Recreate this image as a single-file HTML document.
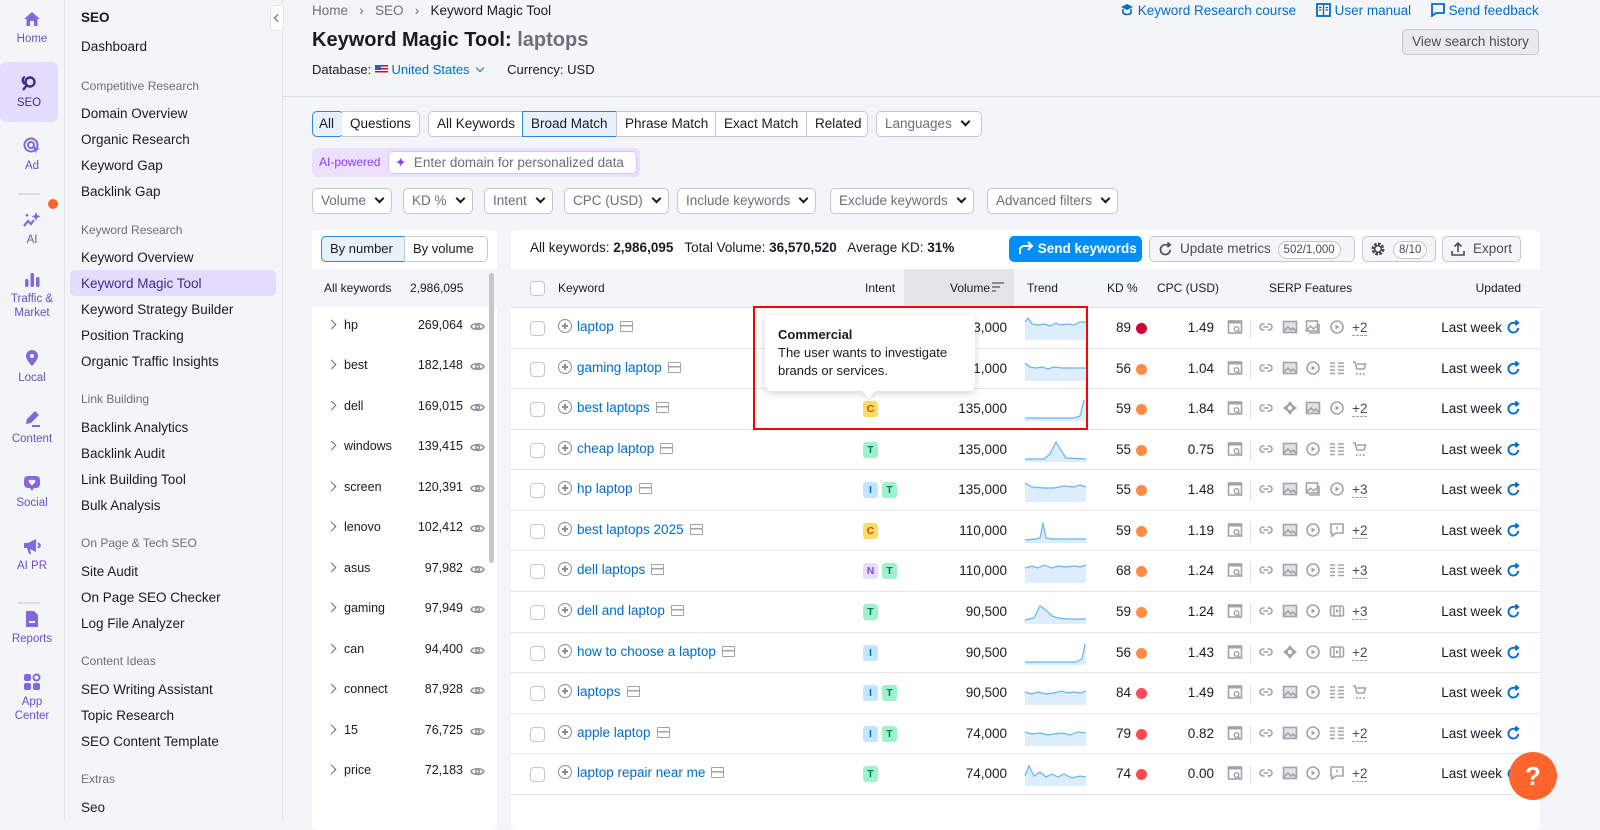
<!DOCTYPE html>
<html><head><meta charset="utf-8"><style>
*{box-sizing:border-box;margin:0;padding:0}
body{width:1600px;height:820px;overflow:hidden;background:#f4f5f9;font-family:"Liberation Sans",Arial,sans-serif;color:#191b23;font-size:13px;position:relative}
i{font-style:normal}
.abs{position:absolute}
.rail{left:0;top:0;width:65px;height:820px;border-right:1px solid #e4e5eb;background:#f4f5f9}
.ri{position:absolute;left:0;width:64px;text-align:center;color:#6c4fc2;font-size:11.5px;line-height:14px}
.ri svg{display:block;margin:0 auto 4px}
.nav{left:65px;top:0;width:218px;height:820px;border-right:1px solid #e4e5eb}
.nav div{position:absolute;left:16px;font-size:13.5px;white-space:nowrap}
.nav .h{color:#6c6e79;font-size:12px}
.btn{position:absolute;height:26px;border:1px solid #c4c7cf;border-radius:5px;background:#fff;font-size:13.5px;line-height:24px;padding:0 8px;white-space:nowrap;color:#191b23}
.sel{color:#6c6e79}
.chev{display:inline-block;width:7px;height:7px;border-right:2px solid #191b23;border-bottom:2px solid #191b23;transform:rotate(45deg);margin-left:10px;position:relative;top:-3px}
.card{background:#fff;border-radius:6px}
.row{position:absolute;left:511px;width:1029px;height:41px;border-top:1px solid #e4e5eb;font-size:13.5px}
.row>*{position:absolute;top:12px}
.cb{left:19px;top:13px!important;width:15px;height:15px;border:1px solid #c4c7cf;border-radius:4px;background:#fff}
.kw{left:47px;color:#006dca;white-space:nowrap;top:11px!important}
.kw .pl{display:inline-block;width:14px;height:14px;border:1.5px solid #8b8e99;border-radius:50%;vertical-align:-2px;margin-right:5px;position:relative}
.kw .pl:before{content:"";position:absolute;left:2.5px;top:5px;width:6px;height:1.5px;background:#8b8e99}
.kw .pl:after{content:"";position:absolute;left:5px;top:2.5px;width:1.5px;height:6px;background:#8b8e99}
.kw .sq{display:inline-block;width:13px;height:11px;border:1.5px solid #a0a3ad;border-radius:1px;margin-left:6px;vertical-align:-1px;background:linear-gradient(#a0a3ad,#a0a3ad) 0 3px/100% 1.5px no-repeat}
.int{left:352px;top:11px!important}
.b{display:inline-block;width:15px;height:16px;border-radius:3px;font-size:10.5px;font-weight:bold;text-align:center;line-height:16px;margin-right:4px;font-style:normal}
.bC{background:#ffd966;color:#b85c00}.bT{background:#9ef2c9;color:#007c65}.bI{background:#c4e5fe;color:#006dca}.bN{background:#e9dcff;color:#7f4ae8}
.vol{right:533px}
.tr{left:513px;top:8px!important}
.kd{left:590px;width:30px;text-align:right}
.dot{left:625px;top:15px!important;width:11px;height:11px;border-radius:50%;background:#ff8c43}
.cpc{right:326px}
.serp{left:716px;top:11px!important}
.upd{right:38px}
.rf{right:19px;top:12px!important}
.lr{position:absolute;left:312px;width:185px;height:40px;font-size:12.5px}
.lr .a{position:absolute;left:16px;top:14px;width:7px;height:7px;border-right:1.5px solid #6c6e79;border-bottom:1.5px solid #6c6e79;transform:rotate(-45deg)}
.lr .n{position:absolute;left:32px;top:11px}
.lr .c{position:absolute;right:34px;top:11px}
.lr svg{position:absolute;right:12px;top:12px}
</style></head><body>
<svg width="0" height="0" style="position:absolute">
<defs>
<symbol id="s1" viewBox="0 0 16 16"><rect x="1.5" y="2" width="13" height="12" fill="none" stroke="#a0a3ad" stroke-width="1.6"/><rect x="1.5" y="2" width="13" height="2.5" fill="#a0a3ad"/><circle cx="9.5" cy="10" r="2.3" fill="none" stroke="#a0a3ad" stroke-width="1.4"/><path d="M11 11.5l2 2" stroke="#a0a3ad" stroke-width="1.4"/></symbol>
<symbol id="lk" viewBox="0 0 16 16"><path d="M6.5 5H5a3 3 0 000 6h1.5M9.5 5H11a3 3 0 010 6H9.5M5.5 8h5" fill="none" stroke="#a0a3ad" stroke-width="1.6"/></symbol>
<symbol id="im" viewBox="0 0 16 16"><rect x="1.5" y="2.5" width="13" height="11" fill="none" stroke="#a0a3ad" stroke-width="1.6"/><path d="M2 12l4-4 3 3 2-2 3 3" fill="none" stroke="#a0a3ad" stroke-width="1.6"/><rect x="2" y="3" width="12" height="10" fill="#a0a3ad" opacity=".3"/></symbol>
<symbol id="pl" viewBox="0 0 16 16"><circle cx="8" cy="8" r="6" fill="none" stroke="#a0a3ad" stroke-width="1.6"/><path d="M6.5 5.5v5l4-2.5z" fill="#a0a3ad"/></symbol>
<symbol id="ls" viewBox="0 0 16 16"><path d="M1 3h5M1 6.5h5M1 10h5M1 13.5h5M9 3h6M9 6.5h6M9 10h6M9 13.5h6" stroke="#a0a3ad" stroke-width="1.6"/></symbol>
<symbol id="ct" viewBox="0 0 16 16"><path d="M1 2h2l2 7h7l1.5-5H5" fill="none" stroke="#a0a3ad" stroke-width="1.6"/><path d="M4 14h1.5M7.5 14h1.5M11 14h1.5" stroke="#a0a3ad" stroke-width="2"/></symbol>
<symbol id="dm" viewBox="0 0 16 16"><path d="M8 1l3 4 4 3-4 3-3 4-3-4-4-3 4-3z" fill="#a0a3ad"/><circle cx="8" cy="8" r="2.2" fill="#fff"/></symbol>
<symbol id="vd" viewBox="0 0 16 16"><rect x="1.5" y="3" width="13" height="10" rx="2" fill="none" stroke="#a0a3ad" stroke-width="1.6"/><path d="M5 3v10M11 3v10" stroke="#a0a3ad" stroke-width="1.4"/><path d="M7 6v4l3-2z" fill="#a0a3ad"/></symbol>
<symbol id="qa" viewBox="0 0 16 16"><path d="M2 2h12v9H7l-4 3v-3H2z" fill="none" stroke="#a0a3ad" stroke-width="1.6"/><path d="M8 4.5v3" stroke="#a0a3ad" stroke-width="1.4"/></symbol>
<symbol id="ig" viewBox="0 0 16 16"><rect x="1.5" y="2" width="11" height="10" fill="none" stroke="#a0a3ad" stroke-width="1.6"/><path d="M14 5v9H4" fill="none" stroke="#a0a3ad" stroke-width="1.6"/><path d="M2 11l3.5-4 3 3 3-3" fill="none" stroke="#a0a3ad" stroke-width="1.4"/></symbol>
<symbol id="rf" viewBox="0 0 16 16"><path d="M13 8.5A5.2 5.2 0 118 3h3.5" fill="none" stroke="#006dca" stroke-width="2"/><path d="M10 0.5l3 2.5-3 2.5" fill="none" stroke="#006dca" stroke-width="2"/></symbol>
<symbol id="ey" viewBox="0 0 16 16"><path d="M1 8c2-4 12-4 14 0-2 4-12 4-14 0z" fill="none" stroke="#8b8e99" stroke-width="1.5"/><circle cx="8" cy="8" r="2" fill="none" stroke="#8b8e99" stroke-width="1.5"/></symbol>
</defs></svg>

<!-- icon rail -->
<div class="abs rail">
<div class="ri" style="top:10px"><svg width="18" height="18" viewBox="0 0 18 18"><path d="M1 9L9 2l8 7h-2.5v7H11v-5H7v5H3.5V9z" fill="#8367dd"/></svg>Home</div>
<div style="position:absolute;left:0;top:62px;width:58px;height:60px;background:#e3dcfc;border-radius:6px"></div>
<div class="ri" style="top:74px;color:#3d2c8d;width:58px"><svg width="18" height="18" viewBox="0 0 18 18"><circle cx="10" cy="8" r="4.5" fill="none" stroke="#3d2c8d" stroke-width="2.4"/><path d="M7 11l-4 5M5 3c-3 1-3 5 0 7" stroke="#3d2c8d" stroke-width="2.4" fill="none"/></svg>SEO</div>
<div class="ri" style="top:137px"><svg width="18" height="18" viewBox="0 0 18 18"><circle cx="8" cy="8" r="6.5" fill="none" stroke="#8367dd" stroke-width="2"/><circle cx="8" cy="8" r="3" fill="none" stroke="#8367dd" stroke-width="2"/><path d="M9 9l8 3-3 1-1 3z" fill="#8367dd"/></svg>Ad</div>
<div style="position:absolute;left:18px;top:193px;width:22px;height:2px;background:#dcdde3"></div>
<div style="position:absolute;left:48px;top:199px;width:10px;height:10px;border-radius:50%;background:#ff642d"></div>
<div class="ri" style="top:211px"><svg width="20" height="18" viewBox="0 0 20 18"><path d="M14 1l1.3 3.2L18.5 5.5l-3.2 1.3L14 10l-1.3-3.2L9.5 5.5l3.2-1.3z" fill="#8367dd"/><path d="M2 15l4-5 3 3 3-4" fill="none" stroke="#8367dd" stroke-width="2.2"/><path d="M5 2l.7 1.5L7 4.2 5.7 5 5 6.5 4.3 5 3 4.2l1.3-.7z" fill="#8367dd"/></svg>AI</div>
<div class="ri" style="top:272px"><svg width="18" height="16" viewBox="0 0 18 16"><rect x="2" y="7" width="3.5" height="8" rx="1.5" fill="#8367dd"/><rect x="7.5" y="1" width="3.5" height="14" rx="1.5" fill="#8367dd"/><rect x="13" y="5" width="3.5" height="10" rx="1.5" fill="#8367dd"/></svg>Traffic &amp;<br>Market</div>
<div class="ri" style="top:349px"><svg width="16" height="18" viewBox="0 0 16 18"><path d="M8 1a6 6 0 016 6c0 4-6 10-6 10S2 11 2 7a6 6 0 016-6z" fill="#8367dd"/><circle cx="8" cy="7" r="2" fill="#f4f5f9"/></svg>Local</div>
<div class="ri" style="top:410px"><svg width="18" height="18" viewBox="0 0 18 18"><path d="M12 1l4 4-8 8-5 1 1-5z" fill="#8367dd"/><rect x="9" y="15" width="8" height="2" fill="#8367dd"/></svg>Content</div>
<div class="ri" style="top:474px"><svg width="18" height="18" viewBox="0 0 18 18"><rect x="1" y="2" width="16" height="12" rx="4" fill="#8367dd"/><path d="M7 14l2 3 2-3z" fill="#8367dd"/><path d="M9 11.5L6 8.5a1.7 1.7 0 013-2 1.7 1.7 0 013 2z" fill="#f4f5f9"/></svg>Social</div>
<div class="ri" style="top:537px"><svg width="20" height="18" viewBox="0 0 20 18"><path d="M2 6h4l8-4v13l-8-4H2z" fill="#8367dd"/><path d="M5 11l2 6h2l-1-6z" fill="#8367dd"/><path d="M16 6l2 2.5-2 2.5" stroke="#8367dd" stroke-width="2" fill="none"/></svg>AI PR</div>
<div style="position:absolute;left:18px;top:602px;width:22px;height:2px;background:#dcdde3"></div>
<div class="ri" style="top:610px"><svg width="16" height="18" viewBox="0 0 16 18"><path d="M2 1h8l4 4v12H2z" fill="#8367dd"/><rect x="5" y="11" width="6" height="2" fill="#f4f5f9"/></svg>Reports</div>
<div class="ri" style="top:673px"><svg width="18" height="18" viewBox="0 0 18 18"><rect x="1" y="1" width="7" height="7" rx="2" fill="#8367dd"/><circle cx="13.5" cy="4.5" r="3" fill="none" stroke="#8367dd" stroke-width="2"/><rect x="1" y="10" width="7" height="7" rx="2" fill="#8367dd"/><rect x="10" y="10" width="7" height="7" rx="2" fill="#8367dd"/></svg>App<br>Center</div>
</div>

<!-- nav -->
<div class="abs nav">
<div style="top:10px;font-weight:bold">SEO</div>
<div style="top:39px">Dashboard</div>
<div class="h" style="top:79px">Competitive Research</div>
<div style="top:106px">Domain Overview</div>
<div style="top:132px">Organic Research</div>
<div style="top:158px">Keyword Gap</div>
<div style="top:184px">Backlink Gap</div>
<div class="h" style="top:223px">Keyword Research</div>
<div style="top:250px">Keyword Overview</div>
<div style="left:5px;top:270px;width:206px;height:26px;background:#e3dcfc;border-radius:5px"></div>
<div style="top:276px;color:#3d2c8d">Keyword Magic Tool</div>
<div style="top:302px">Keyword Strategy Builder</div>
<div style="top:328px">Position Tracking</div>
<div style="top:354px">Organic Traffic Insights</div>
<div class="h" style="top:392px">Link Building</div>
<div style="top:420px">Backlink Analytics</div>
<div style="top:446px">Backlink Audit</div>
<div style="top:472px">Link Building Tool</div>
<div style="top:498px">Bulk Analysis</div>
<div class="h" style="top:536px">On Page &amp; Tech SEO</div>
<div style="top:564px">Site Audit</div>
<div style="top:590px">On Page SEO Checker</div>
<div style="top:616px">Log File Analyzer</div>
<div class="h" style="top:654px">Content Ideas</div>
<div style="top:682px">SEO Writing Assistant</div>
<div style="top:708px">Topic Research</div>
<div style="top:734px">SEO Content Template</div>
<div class="h" style="top:772px">Extras</div>
<div style="top:800px">Seo</div>
</div>
<div class="abs" style="left:270px;top:5px;width:14px;height:26px;background:#fff;border:1px solid #e4e5eb;border-radius:5px 0 0 5px"><span style="position:absolute;left:4px;top:9px;width:6px;height:6px;border-left:1.5px solid #6c4fc2;border-bottom:1.5px solid #6c4fc2;transform:rotate(45deg)"></span></div>

<!-- header -->
<div class="abs" style="left:312px;top:3px;font-size:13.5px;color:#6c6e79">Home &nbsp;&nbsp;›&nbsp;&nbsp; SEO &nbsp;&nbsp;›&nbsp;&nbsp; <span style="color:#191b23">Keyword Magic Tool</span></div>
<div class="abs" style="left:312px;top:29px;font-size:20px;font-weight:bold">Keyword Magic Tool: <span style="color:#6c6e79">laptops</span></div>
<div class="abs" style="left:312px;top:62px;font-size:13px">Database: <span style="display:inline-block;width:13px;height:9px;background:repeating-linear-gradient(#d1002f 0 1.5px,#fff 1.5px 3px);position:relative;vertical-align:0"><span style="position:absolute;left:0;top:0;width:6px;height:5px;background:#3b5bb5"></span></span> <span style="color:#006dca">United States</span> <span style="display:inline-block;width:6px;height:6px;border-right:1.5px solid #006dca;border-bottom:1.5px solid #006dca;transform:rotate(45deg);position:relative;top:-3px;margin-left:4px"></span><span style="margin-left:24px">Currency: USD</span></div>
<div class="abs" style="left:1120px;top:3px;font-size:13.5px;color:#006dca;white-space:nowrap">
<svg width="14" height="13" viewBox="0 0 14 13" style="vertical-align:-1px"><path d="M7 1L1 4l6 3 6-3z" fill="#006dca"/><path d="M3 6v4c2 2 6 2 8 0V6" fill="none" stroke="#006dca" stroke-width="1.6"/></svg> Keyword Research course
<span style="margin-left:16px"><svg width="15" height="14" viewBox="0 0 15 14" style="vertical-align:-2px"><rect x="1" y="1" width="13" height="12" fill="none" stroke="#006dca" stroke-width="1.8"/><path d="M7.5 1v12M3 4.5h2.5M3 7h2.5M9.5 4.5H12M9.5 7H12" stroke="#006dca" stroke-width="1.3"/></svg> User manual</span>
<span style="margin-left:16px"><svg width="14" height="14" viewBox="0 0 14 14" style="vertical-align:-2px"><path d="M1 1h12v9H5l-4 3z" fill="none" stroke="#006dca" stroke-width="1.8"/></svg> Send feedback</span></div>
<div class="abs" style="left:1402px;top:29px;width:137px;height:26px;background:#e9eaee;border:1px solid #c4c7cf;border-radius:5px;font-size:13.5px;color:#4a4d57;text-align:center;line-height:24px">View search history</div>
<div class="abs" style="left:283px;top:96px;width:1317px;height:1px;background:#dcdde3"></div>

<!-- tabs -->
<div class="btn" style="left:312px;top:111px;width:32px;background:#e6f1fb;border-color:#2e86de;padding:0 6px">All</div>
<div class="btn" style="left:342px;top:111px;width:78px;border-left:none;border-radius:0 5px 5px 0">Questions</div>
<div class="btn" style="left:428px;top:111px;width:95px;border-radius:5px 0 0 5px">All Keywords</div>
<div class="btn" style="left:522px;top:111px;width:95px;background:#e6f1fb;border-color:#2e86de;border-radius:0">Broad Match</div>
<div class="btn" style="left:616px;top:111px;width:100px;border-radius:0">Phrase Match</div>
<div class="btn" style="left:715px;top:111px;width:92px;border-radius:0">Exact Match</div>
<div class="btn" style="left:806px;top:111px;width:62px;border-radius:0 5px 5px 0">Related</div>
<div class="btn sel" style="left:876px;top:111px;width:106px">Languages<span class="chev"></span></div>
<div class="abs" style="left:312px;top:148px;width:328px;height:29px;background:#ece0fd;border-radius:6px"></div>
<div class="abs" style="left:319px;top:155px;font-size:12px;color:#8a3ffc">AI-powered</div>
<div class="abs" style="left:388px;top:151px;width:249px;height:23px;background:#fff;border:1px solid #d7c2fb;border-radius:5px;font-size:13.5px;color:#6c6e79;line-height:21px;padding-left:6px"><span style="color:#8a3ffc">✦</span>&nbsp; Enter domain for personalized data</div>
<div class="btn sel" style="left:312px;top:188px">Volume<span class="chev"></span></div>
<div class="btn sel" style="left:403px;top:188px">KD %<span class="chev"></span></div>
<div class="btn sel" style="left:484px;top:188px">Intent<span class="chev"></span></div>
<div class="btn sel" style="left:564px;top:188px">CPC (USD)<span class="chev"></span></div>
<div class="btn sel" style="left:677px;top:188px">Include keywords<span class="chev"></span></div>
<div class="btn sel" style="left:830px;top:188px">Exclude keywords<span class="chev"></span></div>
<div class="btn sel" style="left:987px;top:188px">Advanced filters<span class="chev"></span></div>

<!-- left panel -->
<div class="abs card" style="left:312px;top:230px;width:185px;height:600px"></div>
<div class="btn" style="left:321px;top:236px;width:84px;background:#e6f1fb;border-color:#2e86de;border-radius:5px 0 0 5px;font-size:13px">By number</div>
<div class="btn" style="left:404px;top:236px;width:84px;border-radius:0 5px 5px 0;font-size:13px">By volume</div>
<div class="abs" style="left:312px;top:269px;width:185px;height:38px;background:#f4f5f9;font-size:12px"><span style="position:absolute;left:12px;top:12px">All keywords</span><span style="position:absolute;left:98px;top:12px">2,986,095</span></div>
<div class="abs" style="left:489px;top:273px;width:5px;height:290px;background:#c4c7cf;border-radius:3px"></div>
<div class="lr" style="top:307px"><span class="a"></span><span class="n">hp</span><span class="c">269,064</span><svg width="15" height="15"><use href="#ey"/></svg></div>
<div class="lr" style="top:347px"><span class="a"></span><span class="n">best</span><span class="c">182,148</span><svg width="15" height="15"><use href="#ey"/></svg></div>
<div class="lr" style="top:388px"><span class="a"></span><span class="n">dell</span><span class="c">169,015</span><svg width="15" height="15"><use href="#ey"/></svg></div>
<div class="lr" style="top:428px"><span class="a"></span><span class="n">windows</span><span class="c">139,415</span><svg width="15" height="15"><use href="#ey"/></svg></div>
<div class="lr" style="top:469px"><span class="a"></span><span class="n">screen</span><span class="c">120,391</span><svg width="15" height="15"><use href="#ey"/></svg></div>
<div class="lr" style="top:509px"><span class="a"></span><span class="n">lenovo</span><span class="c">102,412</span><svg width="15" height="15"><use href="#ey"/></svg></div>
<div class="lr" style="top:550px"><span class="a"></span><span class="n">asus</span><span class="c">97,982</span><svg width="15" height="15"><use href="#ey"/></svg></div>
<div class="lr" style="top:590px"><span class="a"></span><span class="n">gaming</span><span class="c">97,949</span><svg width="15" height="15"><use href="#ey"/></svg></div>
<div class="lr" style="top:631px"><span class="a"></span><span class="n">can</span><span class="c">94,400</span><svg width="15" height="15"><use href="#ey"/></svg></div>
<div class="lr" style="top:671px"><span class="a"></span><span class="n">connect</span><span class="c">87,928</span><svg width="15" height="15"><use href="#ey"/></svg></div>
<div class="lr" style="top:712px"><span class="a"></span><span class="n">15</span><span class="c">76,725</span><svg width="15" height="15"><use href="#ey"/></svg></div>
<div class="lr" style="top:752px"><span class="a"></span><span class="n">price</span><span class="c">72,183</span><svg width="15" height="15"><use href="#ey"/></svg></div>

<!-- main table -->
<div class="abs card" style="left:511px;top:230px;width:1029px;height:600px"></div>
<div class="abs" style="left:530px;top:240px;font-size:13.5px;white-space:nowrap">All keywords: <b>2,986,095</b> &nbsp; Total Volume: <b>36,570,520</b> &nbsp; Average KD: <b>31%</b></div>
<div class="abs" style="left:1009px;top:236px;width:133px;height:26px;background:#008ff8;border-radius:5px;color:#fff;font-weight:bold;font-size:13.5px;line-height:26px;padding-left:9px"><svg width="16" height="14" viewBox="0 0 16 14" style="vertical-align:-2px"><path d="M2 13V9a4 4 0 014-4h8M10 1l4 4-4 4" fill="none" stroke="#fff" stroke-width="2"/></svg> Send keywords</div>
<div class="btn" style="left:1149px;top:236px;width:206px;background:#f4f5f9;color:#4a4d57;padding-left:30px">Update metrics <span style="display:inline-block;border:1px solid #c4c7cf;border-radius:9px;background:#fff;font-size:11.5px;line-height:16px;padding:0 5px;margin-left:3px">502/1,000</span><svg width="15" height="15" viewBox="0 0 16 16" style="position:absolute;left:8px;top:5px"><path d="M13 8.5A5.2 5.2 0 118 3h3.5" fill="none" stroke="#4a4d57" stroke-width="1.8"/><path d="M10 0.5l3 2.5-3 2.5" fill="none" stroke="#4a4d57" stroke-width="1.8"/></svg></div>
<div class="btn" style="left:1362px;top:236px;width:74px;background:#f4f5f9;padding-left:30px"><svg width="16" height="16" viewBox="0 0 16 16" style="position:absolute;left:7px;top:4px"><circle cx="8" cy="8" r="5" fill="none" stroke="#4a4d57" stroke-width="3" stroke-dasharray="2.6 1.3"/><circle cx="8" cy="8" r="3.3" fill="none" stroke="#4a4d57" stroke-width="1.5"/></svg><span style="display:inline-block;border:1px solid #c4c7cf;border-radius:9px;background:#fff;font-size:11.5px;line-height:16px;padding:0 5px;color:#4a4d57">8/10</span></div>
<div class="btn" style="left:1442px;top:236px;width:79px;background:#f4f5f9;color:#4a4d57;padding-left:30px"><svg width="14" height="14" viewBox="0 0 14 14" style="position:absolute;left:8px;top:5px"><path d="M7 10V1M3.5 4.5L7 1l3.5 3.5M1 9v4h12V9" fill="none" stroke="#4a4d57" stroke-width="1.6"/></svg>Export</div>

<div class="abs" style="left:511px;top:269px;width:1029px;height:38px;background:#f4f5f9;font-size:12px;color:#191b23">
<span class="cb abs" style="top:12px!important;left:19px"></span>
<span class="abs" style="left:47px;top:12px">Keyword</span>
<span class="abs" style="left:354px;top:12px">Intent</span>
<span class="abs" style="left:393px;top:0;width:110px;height:38px;background:#e3e4ea"></span>
<span class="abs" style="left:439px;top:12px">Volume</span>
<svg class="abs" style="left:481px;top:13px" width="13" height="11" viewBox="0 0 13 11"><path d="M0 1h12M0 5h8M0 9h4" stroke="#6c6e79" stroke-width="1.6"/></svg>
<span class="abs" style="left:516px;top:12px">Trend</span>
<span class="abs" style="left:596px;top:12px">KD %</span>
<span class="abs" style="left:646px;top:12px">CPC (USD)</span>
<span class="abs" style="left:758px;top:12px">SERP Features</span>
<span class="abs" style="right:19px;top:12px">Updated</span>
</div>

<!-- rows -->
<div class="row" style="top:307px"><span class="cb"></span><span class="kw"><i class="pl"></i>laptop<i class="sq"></i></span><span class="vol">813,000</span><svg class="tr" width="64" height="24"><path d="M1 6 L4 2 L8 8 L14 9 L20 8 L26 10 L32 7 L36 9 L44 8 L50 9 L56 6 L62 6 L62 24 L1 24Z" fill="#dcedfd"/><path d="M1 6 L4 2 L8 8 L14 9 L20 8 L26 10 L32 7 L36 9 L44 8 L50 9 L56 6 L62 6" fill="none" stroke="#64b5f6" stroke-width="1.2"/></svg><span class="kd">89</span><span class="dot" style="background:#d1002f"></span><span class="cpc">1.49</span><span class="serp"><svg width="16" height="16"><use href="#s1"/></svg><span style="display:inline-block;width:1px;height:18px;background:#dcdde3;margin:0 7px;vertical-align:-3px"></span><svg width="16" height="16"><use href="#lk"/></svg>&nbsp;&nbsp;<svg width="16" height="16"><use href="#im"/></svg>&nbsp;&nbsp;<svg width="16" height="16"><use href="#ig"/></svg>&nbsp;&nbsp;<svg width="16" height="16"><use href="#pl"/></svg>&nbsp; <span style="border-bottom:1px dashed #a0a3ad;vertical-align:3px;color:#4a4d57">+2</span></span><span class="upd">Last week</span><svg class="rf" width="15" height="15"><use href="#rf"/></svg></div>

<div class="row" style="top:348px"><span class="cb"></span><span class="kw"><i class="pl"></i>gaming laptop<i class="sq"></i></span><span class="vol">201,000</span><svg class="tr" width="64" height="24"><path d="M1 6 L6 10 L12 11 L18 10 L24 12 L30 10 L38 11 L46 11 L54 11 L62 11 L62 24 L1 24Z" fill="#dcedfd"/><path d="M1 6 L6 10 L12 11 L18 10 L24 12 L30 10 L38 11 L46 11 L54 11 L62 11" fill="none" stroke="#64b5f6" stroke-width="1.2"/></svg><span class="kd">56</span><span class="dot"></span><span class="cpc">1.04</span><span class="serp"><svg width="16" height="16"><use href="#s1"/></svg><span style="display:inline-block;width:1px;height:18px;background:#dcdde3;margin:0 7px;vertical-align:-3px"></span><svg width="16" height="16"><use href="#lk"/></svg>&nbsp;&nbsp;<svg width="16" height="16"><use href="#im"/></svg>&nbsp;&nbsp;<svg width="16" height="16"><use href="#pl"/></svg>&nbsp;&nbsp;<svg width="16" height="16"><use href="#ls"/></svg>&nbsp;&nbsp;<svg width="16" height="16"><use href="#ct"/></svg></span><span class="upd">Last week</span><svg class="rf" width="15" height="15"><use href="#rf"/></svg></div>

<div class="row" style="top:388px"><span class="cb"></span><span class="kw"><i class="pl"></i>best laptops<i class="sq"></i></span><span class="int"><i class="b bC">C</i></span><span class="vol">135,000</span><svg class="tr" width="64" height="24"><path d="M1 21 L50 21 L56 19 L60 3 L62 3 L62 24 L1 24Z" fill="#dcedfd"/><path d="M1 21 L50 21 L56 19 L60 3" fill="none" stroke="#64b5f6" stroke-width="1.2"/></svg><span class="kd">59</span><span class="dot"></span><span class="cpc">1.84</span><span class="serp"><svg width="16" height="16"><use href="#s1"/></svg><span style="display:inline-block;width:1px;height:18px;background:#dcdde3;margin:0 7px;vertical-align:-3px"></span><svg width="16" height="16"><use href="#lk"/></svg>&nbsp;&nbsp;<svg width="16" height="16"><use href="#dm"/></svg>&nbsp;&nbsp;<svg width="16" height="16"><use href="#im"/></svg>&nbsp;&nbsp;<svg width="16" height="16"><use href="#pl"/></svg>&nbsp; <span style="border-bottom:1px dashed #a0a3ad;vertical-align:3px;color:#4a4d57">+2</span></span><span class="upd">Last week</span><svg class="rf" width="15" height="15"><use href="#rf"/></svg></div>

<div class="row" style="top:429px"><span class="cb"></span><span class="kw"><i class="pl"></i>cheap laptop<i class="sq"></i></span><span class="int"><i class="b bT">T</i></span><span class="vol">135,000</span><svg class="tr" width="64" height="24"><path d="M1 21 L20 21 L26 16 L32 4 L38 14 L42 20 L62 21 L62 24 L1 24Z" fill="#dcedfd"/><path d="M1 21 L20 21 L26 16 L32 4 L38 14 L42 20 L62 21" fill="none" stroke="#64b5f6" stroke-width="1.2"/></svg><span class="kd">55</span><span class="dot"></span><span class="cpc">0.75</span><span class="serp"><svg width="16" height="16"><use href="#s1"/></svg><span style="display:inline-block;width:1px;height:18px;background:#dcdde3;margin:0 7px;vertical-align:-3px"></span><svg width="16" height="16"><use href="#lk"/></svg>&nbsp;&nbsp;<svg width="16" height="16"><use href="#im"/></svg>&nbsp;&nbsp;<svg width="16" height="16"><use href="#pl"/></svg>&nbsp;&nbsp;<svg width="16" height="16"><use href="#ls"/></svg>&nbsp;&nbsp;<svg width="16" height="16"><use href="#ct"/></svg></span><span class="upd">Last week</span><svg class="rf" width="15" height="15"><use href="#rf"/></svg></div>

<div class="row" style="top:469px"><span class="cb"></span><span class="kw"><i class="pl"></i>hp laptop<i class="sq"></i></span><span class="int"><i class="b bI">I</i><i class="b bT">T</i></span><span class="vol">135,000</span><svg class="tr" width="64" height="24"><path d="M1 5 L8 9 L20 10 L30 10 L40 8 L50 9 L56 7 L62 9 L62 24 L1 24Z" fill="#dcedfd"/><path d="M1 5 L8 9 L20 10 L30 10 L40 8 L50 9 L56 7 L62 9" fill="none" stroke="#64b5f6" stroke-width="1.2"/></svg><span class="kd">55</span><span class="dot"></span><span class="cpc">1.48</span><span class="serp"><svg width="16" height="16"><use href="#s1"/></svg><span style="display:inline-block;width:1px;height:18px;background:#dcdde3;margin:0 7px;vertical-align:-3px"></span><svg width="16" height="16"><use href="#lk"/></svg>&nbsp;&nbsp;<svg width="16" height="16"><use href="#im"/></svg>&nbsp;&nbsp;<svg width="16" height="16"><use href="#ig"/></svg>&nbsp;&nbsp;<svg width="16" height="16"><use href="#pl"/></svg>&nbsp; <span style="border-bottom:1px dashed #a0a3ad;vertical-align:3px;color:#4a4d57">+3</span></span><span class="upd">Last week</span><svg class="rf" width="15" height="15"><use href="#rf"/></svg></div>

<div class="row" style="top:510px"><span class="cb"></span><span class="kw"><i class="pl"></i>best laptops 2025<i class="sq"></i></span><span class="int"><i class="b bC">C</i></span><span class="vol">110,000</span><svg class="tr" width="64" height="24"><path d="M1 21 L12 20 L16 19 L19 4 L22 19 L28 20 L62 20 L62 24 L1 24Z" fill="#dcedfd"/><path d="M1 21 L12 20 L16 19 L19 4 L22 19 L28 20 L62 20" fill="none" stroke="#64b5f6" stroke-width="1.2"/></svg><span class="kd">59</span><span class="dot"></span><span class="cpc">1.19</span><span class="serp"><svg width="16" height="16"><use href="#s1"/></svg><span style="display:inline-block;width:1px;height:18px;background:#dcdde3;margin:0 7px;vertical-align:-3px"></span><svg width="16" height="16"><use href="#lk"/></svg>&nbsp;&nbsp;<svg width="16" height="16"><use href="#im"/></svg>&nbsp;&nbsp;<svg width="16" height="16"><use href="#pl"/></svg>&nbsp;&nbsp;<svg width="16" height="16"><use href="#qa"/></svg>&nbsp; <span style="border-bottom:1px dashed #a0a3ad;vertical-align:3px;color:#4a4d57">+2</span></span><span class="upd">Last week</span><svg class="rf" width="15" height="15"><use href="#rf"/></svg></div>

<div class="row" style="top:550px"><span class="cb"></span><span class="kw"><i class="pl"></i>dell laptops<i class="sq"></i></span><span class="int"><i class="b bN">N</i><i class="b bT">T</i></span><span class="vol">110,000</span><svg class="tr" width="64" height="24"><path d="M1 9 L8 7 L14 9 L20 6 L28 9 L34 7 L42 8 L50 7 L56 8 L62 6 L62 24 L1 24Z" fill="#dcedfd"/><path d="M1 9 L8 7 L14 9 L20 6 L28 9 L34 7 L42 8 L50 7 L56 8 L62 6" fill="none" stroke="#64b5f6" stroke-width="1.2"/></svg><span class="kd">68</span><span class="dot"></span><span class="cpc">1.24</span><span class="serp"><svg width="16" height="16"><use href="#s1"/></svg><span style="display:inline-block;width:1px;height:18px;background:#dcdde3;margin:0 7px;vertical-align:-3px"></span><svg width="16" height="16"><use href="#lk"/></svg>&nbsp;&nbsp;<svg width="16" height="16"><use href="#im"/></svg>&nbsp;&nbsp;<svg width="16" height="16"><use href="#pl"/></svg>&nbsp;&nbsp;<svg width="16" height="16"><use href="#ls"/></svg>&nbsp; <span style="border-bottom:1px dashed #a0a3ad;vertical-align:3px;color:#4a4d57">+3</span></span><span class="upd">Last week</span><svg class="rf" width="15" height="15"><use href="#rf"/></svg></div>

<div class="row" style="top:591px"><span class="cb"></span><span class="kw"><i class="pl"></i>dell and laptop<i class="sq"></i></span><span class="int"><i class="b bT">T</i></span><span class="vol">90,500</span><svg class="tr" width="64" height="24"><path d="M1 20 L10 18 L16 6 L22 10 L28 16 L34 18 L44 19 L62 19 L62 24 L1 24Z" fill="#dcedfd"/><path d="M1 20 L10 18 L16 6 L22 10 L28 16 L34 18 L44 19 L62 19" fill="none" stroke="#64b5f6" stroke-width="1.2"/></svg><span class="kd">59</span><span class="dot"></span><span class="cpc">1.24</span><span class="serp"><svg width="16" height="16"><use href="#s1"/></svg><span style="display:inline-block;width:1px;height:18px;background:#dcdde3;margin:0 7px;vertical-align:-3px"></span><svg width="16" height="16"><use href="#lk"/></svg>&nbsp;&nbsp;<svg width="16" height="16"><use href="#im"/></svg>&nbsp;&nbsp;<svg width="16" height="16"><use href="#pl"/></svg>&nbsp;&nbsp;<svg width="16" height="16"><use href="#vd"/></svg>&nbsp; <span style="border-bottom:1px dashed #a0a3ad;vertical-align:3px;color:#4a4d57">+3</span></span><span class="upd">Last week</span><svg class="rf" width="15" height="15"><use href="#rf"/></svg></div>

<div class="row" style="top:632px"><span class="cb"></span><span class="kw"><i class="pl"></i>how to choose a laptop<i class="sq"></i></span><span class="int"><i class="b bI">I</i></span><span class="vol">90,500</span><svg class="tr" width="64" height="24"><path d="M1 21 L52 21 L58 18 L61 3 L62 3 L62 24 L1 24Z" fill="#dcedfd"/><path d="M1 21 L52 21 L58 18 L61 3" fill="none" stroke="#64b5f6" stroke-width="1.2"/></svg><span class="kd">56</span><span class="dot"></span><span class="cpc">1.43</span><span class="serp"><svg width="16" height="16"><use href="#s1"/></svg><span style="display:inline-block;width:1px;height:18px;background:#dcdde3;margin:0 7px;vertical-align:-3px"></span><svg width="16" height="16"><use href="#lk"/></svg>&nbsp;&nbsp;<svg width="16" height="16"><use href="#dm"/></svg>&nbsp;&nbsp;<svg width="16" height="16"><use href="#pl"/></svg>&nbsp;&nbsp;<svg width="16" height="16"><use href="#vd"/></svg>&nbsp; <span style="border-bottom:1px dashed #a0a3ad;vertical-align:3px;color:#4a4d57">+2</span></span><span class="upd">Last week</span><svg class="rf" width="15" height="15"><use href="#rf"/></svg></div>

<div class="row" style="top:672px"><span class="cb"></span><span class="kw"><i class="pl"></i>laptops<i class="sq"></i></span><span class="int"><i class="b bI">I</i><i class="b bT">T</i></span><span class="vol">90,500</span><svg class="tr" width="64" height="24"><path d="M1 11 L8 13 L14 11 L22 13 L30 12 L38 10 L44 12 L50 11 L56 12 L62 10 L62 24 L1 24Z" fill="#dcedfd"/><path d="M1 11 L8 13 L14 11 L22 13 L30 12 L38 10 L44 12 L50 11 L56 12 L62 10" fill="none" stroke="#64b5f6" stroke-width="1.2"/></svg><span class="kd">84</span><span class="dot" style="background:#ff4953"></span><span class="cpc">1.49</span><span class="serp"><svg width="16" height="16"><use href="#s1"/></svg><span style="display:inline-block;width:1px;height:18px;background:#dcdde3;margin:0 7px;vertical-align:-3px"></span><svg width="16" height="16"><use href="#lk"/></svg>&nbsp;&nbsp;<svg width="16" height="16"><use href="#im"/></svg>&nbsp;&nbsp;<svg width="16" height="16"><use href="#pl"/></svg>&nbsp;&nbsp;<svg width="16" height="16"><use href="#ls"/></svg>&nbsp;&nbsp;<svg width="16" height="16"><use href="#ct"/></svg></span><span class="upd">Last week</span><svg class="rf" width="15" height="15"><use href="#rf"/></svg></div>

<div class="row" style="top:713px"><span class="cb"></span><span class="kw"><i class="pl"></i>apple laptop<i class="sq"></i></span><span class="int"><i class="b bI">I</i><i class="b bT">T</i></span><span class="vol">74,000</span><svg class="tr" width="64" height="24"><path d="M1 10 L8 12 L16 11 L24 13 L30 12 L38 11 L46 13 L54 10 L62 11 L62 24 L1 24Z" fill="#dcedfd"/><path d="M1 10 L8 12 L16 11 L24 13 L30 12 L38 11 L46 13 L54 10 L62 11" fill="none" stroke="#64b5f6" stroke-width="1.2"/></svg><span class="kd">79</span><span class="dot" style="background:#ff4953"></span><span class="cpc">0.82</span><span class="serp"><svg width="16" height="16"><use href="#s1"/></svg><span style="display:inline-block;width:1px;height:18px;background:#dcdde3;margin:0 7px;vertical-align:-3px"></span><svg width="16" height="16"><use href="#lk"/></svg>&nbsp;&nbsp;<svg width="16" height="16"><use href="#im"/></svg>&nbsp;&nbsp;<svg width="16" height="16"><use href="#pl"/></svg>&nbsp;&nbsp;<svg width="16" height="16"><use href="#ls"/></svg>&nbsp; <span style="border-bottom:1px dashed #a0a3ad;vertical-align:3px;color:#4a4d57">+2</span></span><span class="upd">Last week</span><svg class="rf" width="15" height="15"><use href="#rf"/></svg></div>

<div class="row" style="top:753px"><span class="cb"></span><span class="kw"><i class="pl"></i>laptop repair near me<i class="sq"></i></span><span class="int"><i class="b bT">T</i></span><span class="vol">74,000</span><svg class="tr" width="64" height="24"><path d="M1 14 L5 4 L10 14 L16 10 L22 15 L28 12 L34 15 L40 12 L48 16 L56 14 L62 15 L62 24 L1 24Z" fill="#dcedfd"/><path d="M1 14 L5 4 L10 14 L16 10 L22 15 L28 12 L34 15 L40 12 L48 16 L56 14 L62 15" fill="none" stroke="#64b5f6" stroke-width="1.2"/></svg><span class="kd">74</span><span class="dot" style="background:#ff4953"></span><span class="cpc">0.00</span><span class="serp"><svg width="16" height="16"><use href="#s1"/></svg><span style="display:inline-block;width:1px;height:18px;background:#dcdde3;margin:0 7px;vertical-align:-3px"></span><svg width="16" height="16"><use href="#lk"/></svg>&nbsp;&nbsp;<svg width="16" height="16"><use href="#im"/></svg>&nbsp;&nbsp;<svg width="16" height="16"><use href="#pl"/></svg>&nbsp;&nbsp;<svg width="16" height="16"><use href="#qa"/></svg>&nbsp; <span style="border-bottom:1px dashed #a0a3ad;vertical-align:3px;color:#4a4d57">+2</span></span><span class="upd">Last week</span><svg class="rf" width="15" height="15"><use href="#rf"/></svg></div>
<div class="abs" style="left:511px;top:794px;width:1029px;height:1px;background:#e4e5eb"></div>

<!-- tooltip -->
<div class="abs" style="left:765px;top:315px;width:210px;height:76px;background:#fff;border-radius:6px;box-shadow:0 2px 8px rgba(0,0,0,.18);padding:11px 13px;font-size:13px;line-height:18px"><b>Commercial</b><br>The user wants to investigate brands or services.</div>
<div class="abs" style="left:864px;top:386px;width:10px;height:10px;background:#fff;transform:rotate(45deg);box-shadow:2px 2px 3px rgba(0,0,0,.08)"></div>
<div class="abs" style="left:753px;top:306px;width:335px;height:124px;border:2px solid #f00"></div>

<!-- help -->
<div class="abs" style="left:1509px;top:752px;width:48px;height:48px;border-radius:50%;background:#ff642d;color:#fff;font-size:26px;font-weight:bold;text-align:center;line-height:48px">?</div>
</body></html>
